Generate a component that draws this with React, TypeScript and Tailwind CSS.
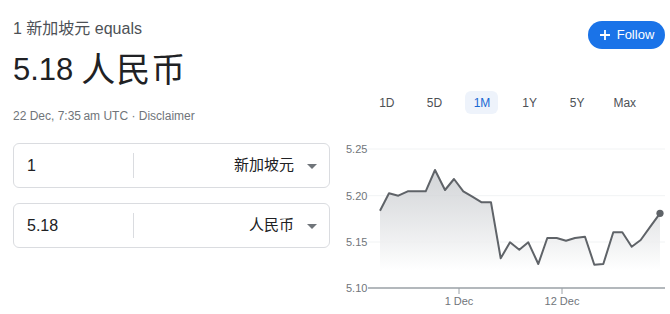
import React from 'react'

const font = { fontFamily: '"Liberation Sans", Arial, "Noto Sans CJK SC", sans-serif' }

const points: [number, number][] = [
	[45, 71.7], [54, 54.3], [63.3, 56.7], [72.7, 52.3], [81.7, 52.3], [90.7, 52.3],
	[100, 31], [110, 51], [119, 40], [128.3, 52.3], [137.3, 57.7], [146.7, 63.3],
	[156, 63.3], [165.7, 119.3], [175, 103.3], [184.3, 110.7], [193.3, 103.3],
	[203.3, 125], [212.3, 99], [221.7, 99], [231, 101.7], [240, 99], [250, 97.7],
	[259.3, 125.7], [268.3, 125], [278.3, 93.3], [287.3, 93.3], [296.7, 107.7],
	[305.7, 101], [315.3, 87.7], [325, 74.3],
]

const ranges = ['1D', '5D', '1M', '1Y', '5Y', 'Max']

function CurrencyBox({ value, currency }: { value: string; currency: string }) {
	return (
		<div className="flex h-[45px] w-[317px] items-center rounded-[6px] border border-[#dadce0] bg-white">
			<div className="w-[119px] pl-[13px] text-[16px] text-[#202124]">{value}</div>
			<div className="h-[25px] w-px bg-[#dadce0]" />
			<div className="flex flex-1 items-center justify-end pr-[12px]">
				<span className="text-[15px] text-[#202124]">{currency}</span>
				<span className="ml-[13px] mt-[1px] h-0 w-0 border-x-[5px] border-t-[5px] border-x-transparent border-t-[#70757a]" />
			</div>
		</div>
	)
}

function Chart() {
	const line = points.map(([x, y], i) => `${i ? 'L' : 'M'}${x} ${y}`).join(' ')
	const area = `${line} L325 149 L45 149 Z`
	const grid = [
		{ y: 10, label: '5.25' },
		{ y: 56.7, label: '5.20' },
		{ y: 103, label: '5.15' },
		{ y: 149, label: '5.10' },
	]
	return (
		<svg width="335" height="174" viewBox="0 0 335 174" className="block">
			<defs>
				<linearGradient id="fill" x1="0" y1="0" x2="0" y2="1">
					<stop offset="0" stopColor="#c4c7cb" stopOpacity="0.75" />
					<stop offset="0.85" stopColor="#ffffff" stopOpacity="0.9" />
				</linearGradient>
			</defs>
			{grid.slice(0, 3).map(g => (
				<line key={g.label} x1="33" x2="330" y1={g.y} y2={g.y} stroke="#f1f3f4" strokeWidth="1" />
			))}
			<path d={area} fill="url(#fill)" />
			<path d={line} fill="none" stroke="#5f6368" strokeWidth="2" strokeLinejoin="round" />
			<circle cx="325" cy="74.3" r="3.6" fill="#5f6368" />
			<line x1="33" x2="330" y1="149" y2="149" stroke="#9aa0a6" strokeWidth="1.5" />
			<line x1="124" x2="124" y1="149" y2="155" stroke="#9aa0a6" strokeWidth="1" />
			<line x1="227" x2="227" y1="149" y2="155" stroke="#9aa0a6" strokeWidth="1" />
			{grid.map(g => (
				<text key={g.label} x="11" y={g.y + 4} fontSize="11" fill="#70757a" style={font}>
					{g.label}
				</text>
			))}
			<text x="124" y="166" fontSize="11" fill="#70757a" textAnchor="middle" style={font}>1 Dec</text>
			<text x="227" y="166" fontSize="11" fill="#70757a" textAnchor="middle" style={font}>12 Dec</text>
		</svg>
	)
}

export default function App() {
	return (
		<div className="flex h-[314px] w-[670px] overflow-hidden bg-white" style={font}>
			<div className="flex w-[335px] flex-col pl-[13px]">
				<div className="mt-[19px] text-[16px] leading-[20px] text-[#4d5156]">1 新加坡元 equals</div>
				<div className="mt-[11px] flex h-[40px] items-center text-[31px] text-[#202124]">
					<span>5.18</span>
					<span className="ml-[8px] text-[34px] tracking-[1px]">人民币</span>
				</div>
				<div className="mt-[18px] text-[12px] leading-[16px] text-[#70757a]">22 Dec, 7:35&#8201;am UTC · Disclaimer</div>
				<div className="mt-[19px] flex flex-col gap-[15px]">
					<CurrencyBox value="1" currency="新加坡元" />
					<CurrencyBox value="5.18" currency="人民币" />
				</div>
			</div>
			<div className="flex flex-1 flex-col">
				<div className="flex justify-end pr-[5px] pt-[21px]">
					<button className="flex h-[28px] w-[77px] items-center justify-center gap-[6px] rounded-full bg-[#1a73e8] text-[13px] font-medium text-white">
						<svg width="12" height="12" viewBox="0 0 12 12">
							<path d="M6 1v10M1 6h10" stroke="white" strokeWidth="1.8" />
						</svg>
						Follow
					</button>
				</div>
				<div className="mt-[42px] flex pl-[28px]">
					{ranges.map(r => (
						<div key={r} className="flex w-[47.6px] justify-center">
							<span
								className={
									r === '1M'
										? 'flex h-[23px] w-[33px] items-center justify-center rounded-[6px] bg-[#eef3fb] text-[12px] text-[#1967d2]'
										: 'flex h-[23px] w-[33px] items-center justify-center text-[12px] text-[#4d5156]'
								}
							>
								{r}
							</span>
						</div>
					))}
				</div>
				<div className="mt-[25px]">
					<Chart />
				</div>
			</div>
		</div>
	)
}
